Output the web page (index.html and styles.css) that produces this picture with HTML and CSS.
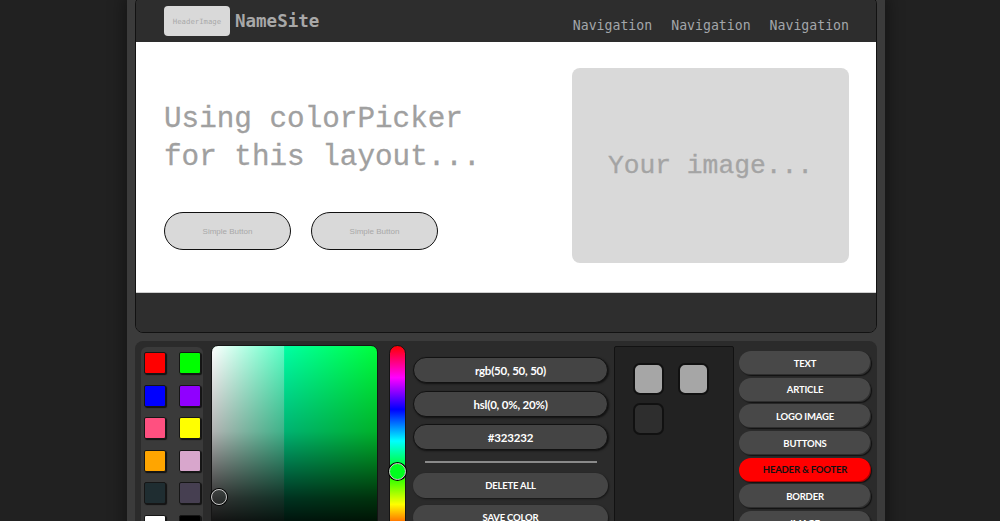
FILE: index.html
```html
<!DOCTYPE html>
<html lang="en">
<head>
<meta charset="utf-8">
<title>colorPicker layout</title>
<link rel="stylesheet" href="styles.css">
</head>
<body>
<div class="frame">
  <div class="preview">
    <header class="site-header">
      <div class="brand">
        <div class="logo">HeaderImage</div>
        <span class="site-name">NameSite</span>
      </div>
      <nav class="nav">
        <a class="nav-link">Navigation</a>
        <a class="nav-link">Navigation</a>
        <a class="nav-link">Navigation</a>
      </nav>
    </header>
    <main class="article">
      <div class="intro">
        <h1 class="headline">Using colorPicker<br>for this layout...</h1>
        <div class="actions">
          <button class="simple-btn">Simple Button</button>
          <button class="simple-btn">Simple Button</button>
        </div>
      </div>
      <div class="image-box">Your image...</div>
    </main>
    <footer class="site-footer"></footer>
  </div>

  <section class="tools">
    <div class="swatches">
      <span class="swatch sw-red"></span>
      <span class="swatch sw-lime"></span>
      <span class="swatch sw-blue"></span>
      <span class="swatch sw-violet"></span>
      <span class="swatch sw-pink"></span>
      <span class="swatch sw-yellow"></span>
      <span class="swatch sw-orange"></span>
      <span class="swatch sw-plum"></span>
      <span class="swatch sw-slate"></span>
      <span class="swatch sw-dusk"></span>
      <span class="swatch sw-white"></span>
      <span class="swatch sw-black"></span>
    </div>
    <div class="sv-area">
      <span class="sv-pointer"></span>
    </div>
    <div class="hue">
      <span class="hue-thumb"></span>
    </div>
    <div class="values">
      <div class="value-pill">rgb(50, 50, 50)</div>
      <div class="value-pill">hsl(0, 0%, 20%)</div>
      <div class="value-pill">#323232</div>
      <hr class="divider">
      <button class="action-btn">Delete all</button>
      <button class="action-btn">Save color</button>
    </div>
    <div class="saved">
      <span class="saved-color saved-light"></span>
      <span class="saved-color saved-light"></span>
      <span class="saved-color saved-dark"></span>
    </div>
    <div class="targets">
      <button class="target-btn">Text</button>
      <button class="target-btn">Article</button>
      <button class="target-btn">Logo image</button>
      <button class="target-btn">Buttons</button>
      <button class="target-btn target-active">Header &amp; Footer</button>
      <button class="target-btn">Border</button>
      <button class="target-btn">Image</button>
    </div>
  </section>
</div>
</body>
</html>
```

FILE: styles.css
```css
* { box-sizing: border-box; }

html, body {
  margin: 0;
  height: 521px;
  overflow: hidden;
  background: #212121;
}

.frame {
  margin-left: 127px;
  width: 758px;
  height: 560px;
  padding: 0 8px;
  background: #3b3b3b;
  box-shadow: 0 0 14px 4px rgba(0, 0, 0, 0.35);
  display: flex;
  flex-direction: column;
  gap: 8px;
}

/* ---------- preview ---------- */
.preview {
  margin-top: -4px;
  border: 1px solid #121212;
  border-radius: 8px;
  overflow: hidden;
  flex: none;
}

.site-header {
  height: 45px;
  padding: 3px 27px 0 28px;
  background: #2d2d2d;
  display: flex;
  align-items: center;
  justify-content: space-between;
}

.brand {
  display: flex;
  align-items: center;
  gap: 5px;
}

.logo {
  width: 66px;
  height: 30px;
  border-radius: 4px;
  background: #d9d9d9;
  color: #a9a9a9;
  font: 7.3px "DejaVu Sans Mono", monospace;
  display: flex;
  align-items: center;
  justify-content: center;
}

.site-name {
  color: #a8a8a8;
  font: bold 17.5px "DejaVu Sans Mono", monospace;
}

.nav {
  display: flex;
  gap: 19px;
  margin-top: 8px;
}

.nav-link {
  color: #a3a6aa;
  font: 13.2px "DejaVu Sans Mono", monospace;
}

.article {
  height: 251px;
  background: #ffffff;
  border-bottom: 1px solid #cfcfcf;
  padding: 26px 27px 0 28px;
  display: flex;
  justify-content: space-between;
}

.intro {
  padding-top: 33px;
}

.headline {
  margin: 0;
  font: normal 29.3px/38px "Liberation Mono", "DejaVu Sans Mono", monospace;
  color: #a0a0a0;
  -webkit-text-stroke: 0.3px #a0a0a0;
}

.actions {
  margin-top: 35px;
  display: flex;
  gap: 20px;
}

.simple-btn {
  width: 127px;
  height: 38px;
  border: 1.5px solid #111;
  border-radius: 19px;
  background: #d9d9d9;
  color: #a8a8a8;
  font: 8px "Liberation Sans", Arial, sans-serif;
  padding: 0;
}

.image-box {
  width: 277px;
  height: 195px;
  border-radius: 8px;
  background: #d9d9d9;
  color: #a4a4a4;
  font: 26.3px "Liberation Mono", "DejaVu Sans Mono", monospace;
  -webkit-text-stroke: 0.3px #a4a4a4;
  display: flex;
  align-items: center;
  justify-content: center;
}

.site-footer {
  height: 39px;
  background: #2e2e2e;
}

/* ---------- tools panel ---------- */
.tools {
  flex: 1;
  background: #2b2b2b;
  border-radius: 8px 8px 0 0;
  padding: 5px 6px;
  display: flex;
  align-items: flex-start;
  font-family: Lato, "Liberation Sans", sans-serif;
}

.swatches {
  margin-top: 1px;
  width: 62px;
  background: #3a3a3a;
  border-radius: 6px;
  padding: 5px 2px 8px 3px;
  display: grid;
  grid-template-columns: 22px 22px;
  column-gap: 13px;
  row-gap: 10.5px;
}

.swatch {
  width: 22px;
  height: 22px;
  border: 1px solid #161616;
  border-radius: 2px;
  box-shadow: 1px 1px 1px rgba(0, 0, 0, 0.7);
}

.sw-red { background: #ff0000; }
.sw-lime { background: #00ff00; }
.sw-blue { background: #0000ff; }
.sw-violet { background: #9000ff; }
.sw-pink { background: #ff5080; }
.sw-yellow { background: #ffff00; }
.sw-orange { background: #ffa500; }
.sw-plum { background: #d8a6cc; }
.sw-slate { background: #1f2d31; }
.sw-dusk { background: #463f51; }
.sw-white { background: #ffffff; }
.sw-black { background: #000000; }

.sv-area {
  position: relative;
  margin-top: -1px;
  margin-left: 8px;
  width: 167px;
  height: 192px;
  border: 1px solid #151515;
  border-radius: 7px 7px 0 0;
  background:
    linear-gradient(to bottom, rgba(0, 0, 0, 0) 0%, rgba(0, 0, 0, 0.3) 45%, rgba(0, 0, 0, 0.8) 80%, #000 100%),
    linear-gradient(to right, #ffffff 0%, rgba(255, 255, 255, 0.35) 43.5%, rgba(255, 255, 255, 0) 44%),
    linear-gradient(to right, #00ffa4 44%, #00ff3c 100%);
}

.sv-pointer {
  position: absolute;
  left: -1px;
  top: 143px;
  width: 16px;
  height: 16px;
  border-radius: 50%;
  border: 1.5px solid #c8c8c8;
  box-shadow: 0 0 0 1px #000;
}

.hue {
  position: relative;
  margin-top: -1px;
  margin-left: 11px;
  width: 17px;
  height: 192px;
  border: 1px solid #151515;
  border-radius: 9px;
  background: linear-gradient(to bottom,
    #ff0000 0%, #ff00ff 16.67%, #0000ff 33.33%, #00ffff 50%,
    #00ff00 66.67%, #ffff00 83.33%, #ff0000 100%);
}

.hue-thumb {
  position: absolute;
  left: -1px;
  top: 117px;
  width: 17px;
  height: 17px;
  border-radius: 50%;
  background: #00ff1e;
  border: 1.5px solid #d0d0d0;
  box-shadow: 0 0 0 1px #000;
}

.values {
  margin-left: 7px;
  width: 195px;
  padding-top: 11px;
  display: flex;
  flex-direction: column;
  gap: 8px;
}

.value-pill {
  height: 26px;
  border: 1px solid #121212;
  border-radius: 13px;
  background: #444444;
  box-shadow: 1px 1px 2px rgba(0, 0, 0, 0.6);
  color: #ffffff;
  font-weight: 700;
  font-size: 11.5px;
  letter-spacing: -0.2px;
  display: flex;
  align-items: center;
  justify-content: center;
}

.values .value-pill:nth-child(3) { margin-top: -1px; }

.divider {
  margin: 3px 11px 3px 12px;
  height: 2px;
  border: none;
  background: #8a8a8a;
}

.action-btn {
  height: 25px;
  border: none;
  border-radius: 13px;
  background: #454545;
  box-shadow: 1px 1px 2px rgba(0, 0, 0, 0.5);
  color: #ffffff;
  font: 700 9.5px Lato, sans-serif;
  text-transform: uppercase;
  letter-spacing: -0.2px;
  padding: 0;
  margin-top: -1px;
}

.saved {
  margin-left: 6px;
  width: 120px;
  height: 200px;
  background: #222222;
  border: 1px solid #121212;
  border-radius: 2px;
  padding: 16px 18px;
  display: grid;
  grid-template-columns: 31px 31px;
  grid-auto-rows: 32px;
  column-gap: 14px;
  row-gap: 8px;
  align-content: start;
}

.saved-color {
  border: 2px solid #111;
  border-radius: 7px;
}

.saved-light { background: #a6a6a6; }
.saved-dark { background: #2e2e2e; }

.targets {
  margin-left: 5px;
  width: 132px;
  padding-top: 5px;
  display: flex;
  flex-direction: column;
  gap: 2.7px;
}

.target-btn {
  height: 24px;
  border: none;
  border-radius: 12px;
  background: #484848;
  box-shadow: inset -1px -1px 0 rgba(0, 0, 0, 0.35), 1px 1px 1px #111;
  color: #ffffff;
  font: 700 9.5px Lato, sans-serif;
  text-transform: uppercase;
  letter-spacing: -0.2px;
  padding: 0;
}

.target-active {
  background: #ff0000;
  color: #111111;
}
```
